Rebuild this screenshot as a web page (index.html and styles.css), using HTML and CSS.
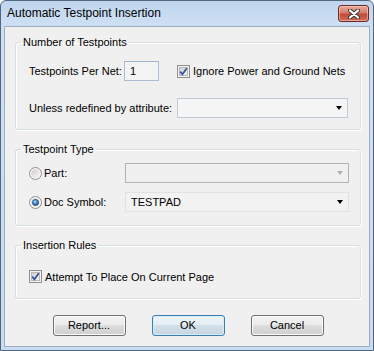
FILE: index.html
```html
<!DOCTYPE html>
<html>
<head>
<meta charset="utf-8">
<link rel="stylesheet" href="styles.css">
</head>
<body>
<div class="window">
  <div class="titlebar">
    <span class="title">Automatic Testpoint Insertion</span>
    <span class="close">
      <svg width="12" height="10" viewBox="0 0 12 10">
        <path d="M2 1.5 L10 8.5 M10 1.5 L2 8.5" stroke="#3b3b3b" stroke-width="4.2" stroke-linecap="round" fill="none"/>
        <path d="M2 1.5 L10 8.5 M10 1.5 L2 8.5" stroke="#ffffff" stroke-width="2.2" stroke-linecap="round" fill="none"/>
      </svg>
    </span>
  </div>
  <div class="client">
    <fieldset class="group g1">
      <legend>Number of Testpoints</legend>
      <div class="grid grid1">
        <div class="pair">
          <span class="lbl">Testpoints Per Net:</span>
          <span class="textbox">1</span>
        </div>
        <div class="check">
          <span class="box">
            <svg width="13" height="13" viewBox="0 0 13 13">
              <defs><linearGradient id="cg1" x1="0" y1="0" x2="1" y2="1"><stop offset="0" stop-color="#cfcfcf"/><stop offset="1" stop-color="#f4f4f4"/></linearGradient></defs>
              <rect x="0.5" y="0.5" width="12" height="12" fill="#f4f4f4" stroke="#8f8f8f"/>
              <rect x="2.5" y="2.5" width="8" height="8" fill="url(#cg1)" stroke="#b9b9b9"/>
              <path d="M3.2 6.6 L5.4 9.3 L9.8 3.2" stroke="#3c4f9a" stroke-width="1.7" fill="none"/>
            </svg>
          </span>
          <span>Ignore Power and Ground Nets</span>
        </div>
        <span class="lbl">Unless redefined by attribute:</span>
        <div class="combo combo-a"><span class="arrow"></span></div>
      </div>
    </fieldset>

    <fieldset class="group g2">
      <legend>Testpoint Type</legend>
      <div class="grid grid2">
        <div class="radio">
          <svg width="13" height="13" viewBox="0 0 13 13">
            <defs><linearGradient id="rg1" x1="0" y1="0" x2="1" y2="1"><stop offset="0" stop-color="#cdcdcd"/><stop offset="1" stop-color="#f7f7f7"/></linearGradient></defs>
            <circle cx="6.5" cy="6.5" r="6" fill="#f5f5f5" stroke="#8f8f8f"/>
            <circle cx="6.5" cy="6.5" r="4.2" fill="url(#rg1)"/>
          </svg>
          <span>Part:</span>
        </div>
        <div class="combo combo-dis"><span class="arrow"></span></div>
        <div class="radio">
          <svg width="13" height="13" viewBox="0 0 13 13">
            <defs>
              <linearGradient id="rg2" x1="0" y1="0" x2="1" y2="1"><stop offset="0" stop-color="#cdcdcd"/><stop offset="1" stop-color="#f7f7f7"/></linearGradient>
              <radialGradient id="rd" cx="0.4" cy="0.35" r="0.7"><stop offset="0" stop-color="#bfe8fb"/><stop offset="0.5" stop-color="#3d8fd6"/><stop offset="1" stop-color="#164f8f"/></radialGradient>
            </defs>
            <circle cx="6.5" cy="6.5" r="6" fill="#f5f5f5" stroke="#8f8f8f"/>
            <circle cx="6.5" cy="6.5" r="4.2" fill="url(#rg2)"/>
            <circle cx="6.5" cy="6.5" r="3" fill="url(#rd)" stroke="#1d3c63" stroke-width="0.8"/>
          </svg>
          <span>Doc Symbol:</span>
        </div>
        <div class="combo combo-b"><span class="val">TESTPAD</span><span class="arrow"></span></div>
      </div>
    </fieldset>

    <fieldset class="group g3">
      <legend>Insertion Rules</legend>
      <div class="grid3">
        <div class="check">
          <span class="box">
            <svg width="13" height="13" viewBox="0 0 13 13">
              <defs><linearGradient id="cg2" x1="0" y1="0" x2="1" y2="1"><stop offset="0" stop-color="#cfcfcf"/><stop offset="1" stop-color="#f4f4f4"/></linearGradient></defs>
              <rect x="0.5" y="0.5" width="12" height="12" fill="#f4f4f4" stroke="#8f8f8f"/>
              <rect x="2.5" y="2.5" width="8" height="8" fill="url(#cg2)" stroke="#b9b9b9"/>
              <path d="M3.2 6.6 L5.4 9.3 L9.8 3.2" stroke="#3c4f9a" stroke-width="1.7" fill="none"/>
            </svg>
          </span>
          <span>Attempt To Place On Current Page</span>
        </div>
      </div>
    </fieldset>

    <div class="buttons">
      <span class="btn">Report...</span>
      <span class="btn default">OK</span>
      <span class="btn">Cancel</span>
    </div>
  </div>
</div>
</body>
</html>
```
FILE: styles.css
```css
html, body {
  margin: 0;
  padding: 0;
  background: #ffffff;
}
body {
  font-family: "Liberation Sans", Arial, sans-serif;
  font-size: 11px;
  color: #000;
}
.window {
  width: 374px;
  height: 351px;
  box-sizing: border-box;
  border: 1px solid #52667d;
  border-radius: 6px 6px 0 0;
  background: linear-gradient(#bfd5ee 0px, #cfe0f3 26px, #c8dbf0 100%);
  padding: 0 3px 3px 3px;
  display: flex;
  flex-direction: column;
}
.titlebar {
  height: 25px;
  display: flex;
  align-items: flex-start;
  flex: none;
}
.title {
  font-size: 12px;
  line-height: 25px;
  padding-left: 3px;
  flex: 1;
  color: #000;
}
.close {
  width: 31px;
  height: 17px;
  box-sizing: border-box;
  margin-top: 4px;
  margin-right: 1px;
  border: 1px solid #6b2b25;
  border-radius: 3px;
  background: linear-gradient(#e7a899 0%, #d77b6b 45%, #c24a38 55%, #d26a55 100%);
  box-shadow: inset 0 0 0 1px rgba(255, 220, 210, 0.5);
  display: flex;
  align-items: center;
  justify-content: center;
}
.close svg { display: block; }
.client {
  flex: 1;
  background: #f0f0f0;
  border: 1px solid #9aaec4;
  padding: 9px 8px 0 10px;
  display: flex;
  flex-direction: column;
}
.group {
  margin: 0;
  border: 1px solid #d5dfe5;
  border-radius: 3px;
  box-shadow: inset 1px 1px 0 #ffffff, 1px 1px 0 #ffffff;
  padding: 0 0 0 5px;
  min-width: 0;
}
.group legend {
  padding: 0 2px;
  line-height: 13px;
  font-size: 11px;
}
.g1 { padding-top: 12px; padding-bottom: 11px; }
.g2 { margin-top: 13px; padding-top: 7px; padding-bottom: 13px; }
.g3 { margin-top: 13px; padding-top: 18px; padding-bottom: 15px; }
.grid {
  margin-left: 8px;
  display: grid;
  align-items: center;
}
.grid1 {
  grid-template-columns: 148px 171px;
  grid-template-rows: 20px 20px;
  row-gap: 17px;
}
.grid2 {
  grid-template-columns: 96px 224px;
  grid-template-rows: 20px 20px;
  row-gap: 9px;
}
.grid3 {
  margin-left: 8px;
  height: 13px;
  display: flex;
  align-items: center;
}
.pair {
  display: grid;
  grid-template-columns: 95px 35px;
  align-items: center;
}
.textbox {
  height: 20px;
  box-sizing: border-box;
  border: 1px solid #a9bdd3;
  border-top-color: #9fb3c9;
  background: #f3f3f3;
  padding-left: 5px;
  line-height: 18px;
}
.check {
  display: flex;
  align-items: center;
  gap: 3px;
}
.box { width: 13px; height: 13px; display: block; }
.box svg, .radio svg { display: block; flex: none; }
.radio {
  display: flex;
  align-items: center;
  gap: 2px;
}
.combo {
  height: 20px;
  box-sizing: border-box;
  border: 1px solid #b7c6d6;
  background: #f5f5f5;
  display: flex;
  align-items: center;
  justify-content: space-between;
  padding: 0 5px 0 5px;
}
.combo-a { border-color: #bfcbd8; }
.combo-dis { border-color: #aeb3b6; background: #f0f0f0; }
.combo-dis .arrow { border-top-color: #b0b0b0; }
.combo-b { border-color: #e2e2e2; background: #f2f2f2; }
.val { line-height: 18px; }
.arrow {
  margin-left: auto;
  width: 0;
  height: 0;
  border-left: 3.5px solid transparent;
  border-right: 3.5px solid transparent;
  border-top: 4px solid #000;
  margin-right: 0px;
}
.buttons {
  margin-top: 16px;
  display: flex;
  justify-content: center;
  gap: 26px;
}
.btn {
  width: 73px;
  height: 21px;
  box-sizing: border-box;
  border: 1px solid #707070;
  border-radius: 3px;
  background: linear-gradient(#f2f2f2 0%, #ebebeb 50%, #dddddd 50%, #cfcfcf 100%);
  box-shadow: inset 0 0 0 1px #fbfbfb;
  display: flex;
  align-items: center;
  justify-content: center;
  line-height: 19px;
}
.btn.default {
  border-color: #3c7fb1;
  background: linear-gradient(#eef5f9 0%, #e3edf3 50%, #d3e0e9 50%, #c6d6e2 100%);
  box-shadow: inset 0 0 0 1px #d6ecf8;
}
```
